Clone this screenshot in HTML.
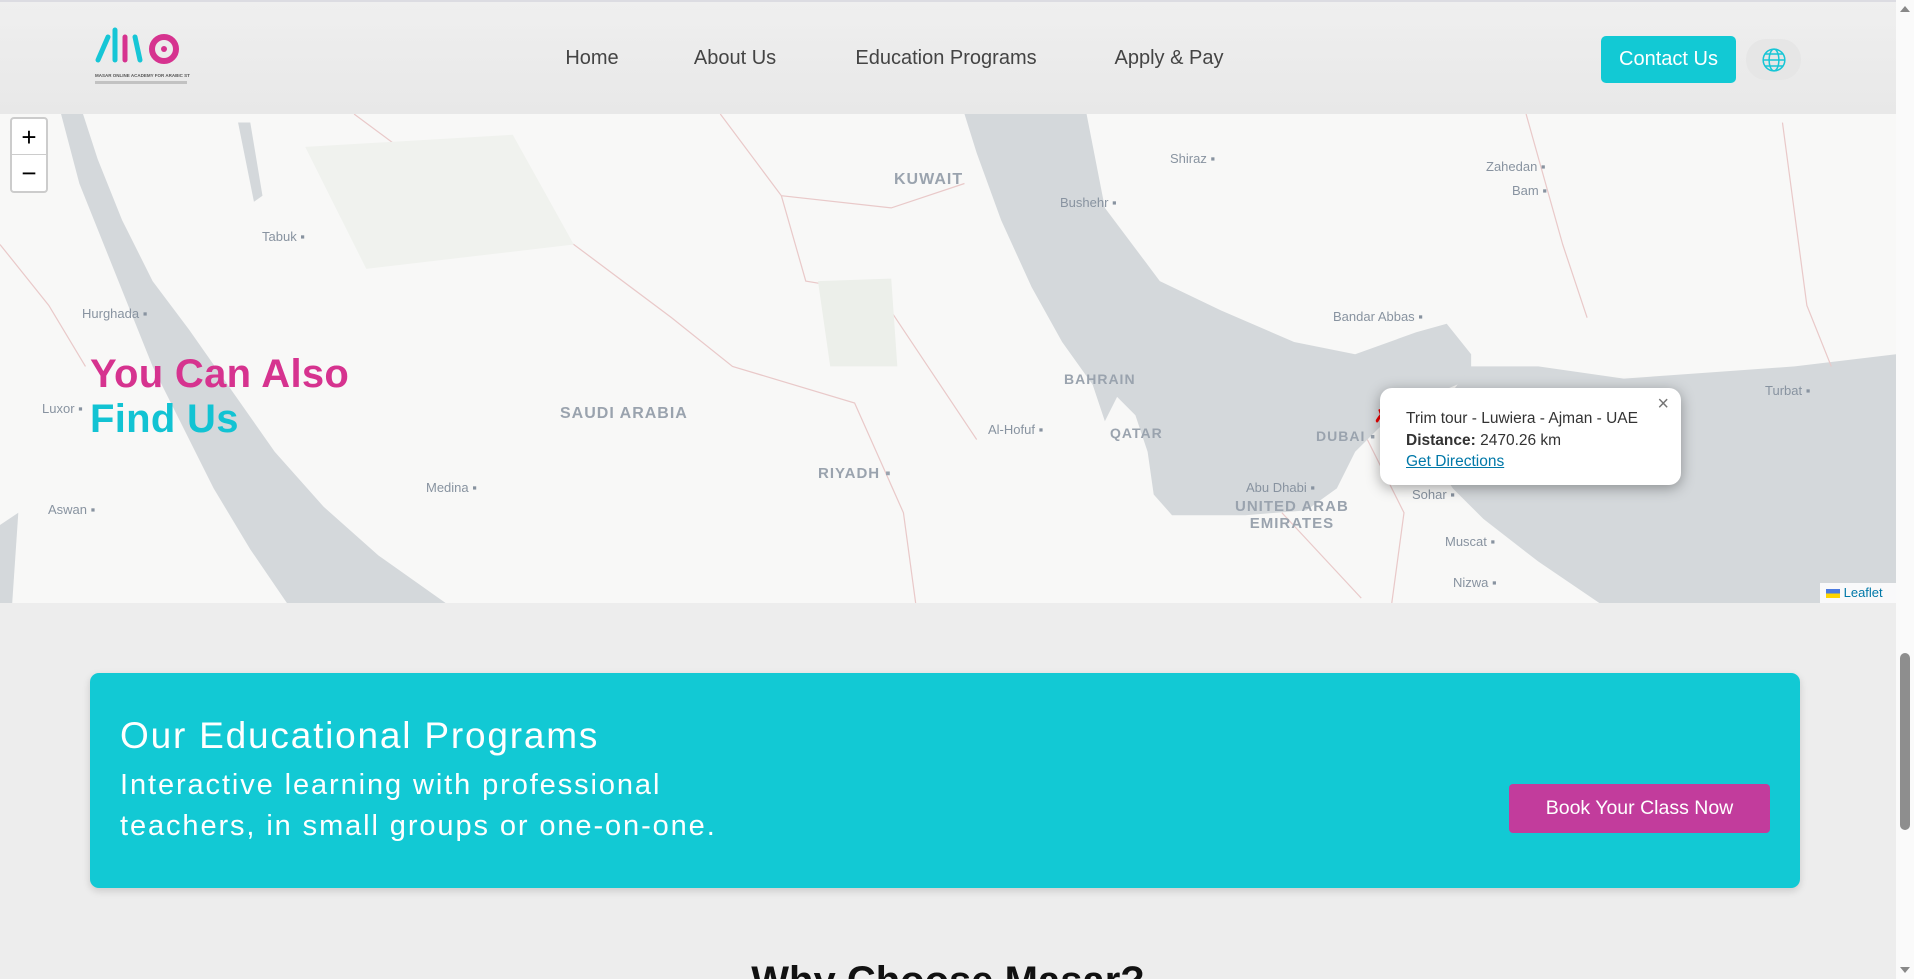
<!DOCTYPE html>
<html style="overflow:hidden;height:979px"><head><meta charset="utf-8"><style>
*{margin:0;padding:0;box-sizing:border-box}
body{width:1914px;height:979px;overflow:hidden;background:#ededed;font-family:"Liberation Sans",sans-serif;position:relative}
.hdr{position:absolute;left:0;top:0;width:1896px;height:114px;background:linear-gradient(#efefef,#e8e8e8);border-top:2px solid #dcdce2;z-index:5}
.nav a{position:absolute;top:45px;font-size:20px;color:#444;text-decoration:none;transform:translateX(-50%);white-space:nowrap}
.map{position:absolute;left:0;top:114px;width:1896px;height:489px;background:#f8f8f7;overflow:hidden}
.lbl{position:absolute;font-size:13px;color:#8893a0;white-space:nowrap}
.cap{position:absolute;font-size:16px;color:#9aa3ae;letter-spacing:1px;font-weight:bold;white-space:nowrap}
.sb{position:absolute;left:1896px;top:0;width:18px;height:979px;background:#fafafa}
</style></head><body>
<div class="hdr">
 <svg style="position:absolute;left:94px;top:25px" width="96" height="62" viewBox="0 0 96 62">
  <line x1="4" y1="33" x2="14" y2="10" stroke="#16c6d6" stroke-width="5" stroke-linecap="round"/>
  <line x1="21" y1="3" x2="21" y2="33" stroke="#16c6d6" stroke-width="5" stroke-linecap="round"/>
  <line x1="31" y1="10" x2="31" y2="33" stroke="#d6338f" stroke-width="5" stroke-linecap="round"/>
  <line x1="41" y1="10" x2="46" y2="33" stroke="#16c6d6" stroke-width="5" stroke-linecap="round"/>
  <circle cx="70" cy="22" r="12" fill="none" stroke="#d6338f" stroke-width="6"/>
  <circle cx="70" cy="22" r="3" fill="#d6338f"/>
  <text x="1" y="50" font-size="4.5" font-family="Liberation Sans" font-weight="bold" fill="#555">MASAR ONLINE ACADEMY FOR ARABIC STUDIES</text>
  <rect x="1" y="54" width="92" height="3" fill="#999" opacity=".5"/>
 </svg>
 <div class="nav"><a style="left:592px">Home</a><a style="left:735px">About Us</a><a style="left:946px">Education Programs</a><a style="left:1169px">Apply &amp; Pay</a></div>
 <div style="position:absolute;left:1601px;top:34px;width:135px;height:47px;background:#12c9d4;border-radius:5px;color:#fff;font-size:20px;line-height:47px;text-align:center">Contact Us</div>
 <div style="position:absolute;left:1746px;top:37px;width:55px;height:41px;background:#e6e6e6;border-radius:20px"></div>
 <svg style="position:absolute;left:1761px;top:45px" width="26" height="26" viewBox="0 0 24 24" fill="none" stroke="#16c6d6" stroke-width="1.4"><circle cx="12" cy="12" r="10"/><ellipse cx="12" cy="12" rx="4.5" ry="10"/><line x1="2" y1="12" x2="22" y2="12"/><path d="M4 6.5h16M4 17.5h16"/></svg>
</div>
<div class="map">
 <svg style="position:absolute;left:0;top:0" width="1896" height="489" viewBox="0 93 1553 401" preserveAspectRatio="none">
  <path d="M50 93 L68 93 L80 130 L100 180 L125 230 L155 270 L190 320 L225 370 L265 415 L310 455 L365 494 L235 494 L205 450 L175 400 L150 350 L125 300 L105 250 L85 200 L65 150 Z" fill="#d4d8db"/>
  <path d="M195 100 L205 100 L215 160 L208 165 Z" fill="#d4d8db"/>
  <path d="M0 430 L15 420 L10 494 L0 494 Z" fill="#d4d8db"/>
  <path d="M790 93 L890 93 L905 170 L950 230 L1000 254 L1060 280 L1110 290 L1160 272 L1185 265 L1205 290 L1205 310 L1170 325 L1135 345 L1110 370 L1095 400 L1070 418 L1020 422 L960 422 L945 405 L940 370 L930 340 L915 325 L905 345 L895 315 L870 280 L845 235 L820 180 L800 125 Z" fill="#d4d8db"/>
  <path d="M1205 300 L1260 300 L1330 310 L1400 305 L1470 300 L1553 290 L1553 494 L1310 494 L1260 460 L1215 425 L1190 400 L1170 370 L1170 340 L1190 320 Z" fill="#d4d8db"/>
  <g fill="none" stroke="#e9c9c9" stroke-width="1">
   <path d="M590 93 L640 160 L730 170 L790 150"/><path d="M640 160 L660 230 L720 240 L760 300 L800 360"/>
   <path d="M1050 420 L1115 490"/><path d="M1120 360 L1150 420 L1140 494"/>
   <path d="M1250 93 L1280 200 L1300 260"/><path d="M1460 100 L1480 250 L1500 300"/>
   <path d="M290 93 L380 160 L470 200 L550 260 L600 300 L700 330 L740 420 L750 494"/>
   <path d="M0 200 L40 250 L70 300"/>
  </g>
  <path d="M670 230 L730 228 L735 300 L680 300 Z" fill="#ecefea"/>
  <path d="M250 120 L420 110 L470 200 L300 220 Z" fill="#f0f2ee"/>
 </svg>
 <div class="lbl" style="left:262px;top:115px">Tabuk ▪</div>
 <div class="lbl" style="left:82px;top:192px">Hurghada ▪</div>
 <div class="lbl" style="left:42px;top:287px">Luxor ▪</div>
 <div class="lbl" style="left:48px;top:388px">Aswan ▪</div>
 <div class="lbl" style="left:426px;top:366px">Medina ▪</div>
 <div class="lbl" style="left:1060px;top:81px">Bushehr ▪</div>
 <div class="lbl" style="left:1170px;top:37px">Shiraz ▪</div>
 <div class="lbl" style="left:1486px;top:45px">Zahedan ▪</div>
 <div class="lbl" style="left:1512px;top:69px">Bam ▪</div>
 <div class="lbl" style="left:1333px;top:195px">Bandar Abbas ▪</div>
 <div class="lbl" style="left:988px;top:308px">Al-Hofuf ▪</div>
 <div class="lbl" style="left:1246px;top:366px">Abu Dhabi ▪</div>
 <div class="lbl" style="left:1412px;top:373px">Sohar ▪</div>
 <div class="lbl" style="left:1445px;top:420px">Muscat ▪</div>
 <div class="lbl" style="left:1453px;top:461px">Nizwa ▪</div>
 <div class="lbl" style="left:1765px;top:269px">Turbat ▪</div>
 <div class="cap" style="left:894px;top:57px">KUWAIT</div>
 <div class="cap" style="left:560px;top:291px">SAUDI ARABIA</div>
 <div class="cap" style="left:818px;top:351px;font-size:15px">RIYADH ▪</div>
 <div class="cap" style="left:1064px;top:257px;font-size:14px">BAHRAIN</div>
 <div class="cap" style="left:1110px;top:311px;font-size:14px">QATAR</div>
 <div class="cap" style="left:1316px;top:314px;font-size:14px">DUBAI ▪</div>
 <div class="cap" style="left:1235px;top:384px;font-size:15px;text-align:center">UNITED ARAB<br>EMIRATES</div>
 <div style="position:absolute;left:10px;top:3px;width:38px;height:76px;background:#fff;border:2px solid #ccc;border-radius:4px">
  <div style="height:36px;border-bottom:1px solid #ccc;font-size:26px;text-align:center;line-height:36px">+</div>
  <div style="font-size:26px;text-align:center;line-height:36px">−</div>
 </div>
 <div style="position:absolute;left:90px;top:238px;font-size:40px;font-weight:bold;line-height:45px;letter-spacing:0.3px"><span style="color:#d6338f">You Can Also</span><br><span style="color:#12c3d3">Find Us</span></div>
 <div style="position:absolute;left:1374px;top:292px;color:#e00;font-weight:bold;font-size:18px">✗</div>
 <div style="position:absolute;left:1380px;top:274px;width:301px;height:97px;background:#fff;border-radius:12px;box-shadow:0 3px 14px rgba(0,0,0,.35);font-size:15.5px;color:#333;padding:20px 0 0 26px;line-height:21.5px">
  <div style="position:absolute;right:12px;top:6px;font-size:20px;color:#757575">×</div>
  Trim tour - Luwiera - Ajman - UAE<br><b>Distance:</b> 2470.26 km<br><span style="color:#0078a8;text-decoration:underline">Get Directions</span>
 </div>
 <div style="position:absolute;left:1820px;top:469px;width:76px;height:20px;background:rgba(255,255,255,.85);font-size:13px;color:#0078a8;padding:2px 0 0 6px"><span style="display:inline-block;width:14px;height:9px;background:linear-gradient(#4c7be0 50%,#ffd500 50%);vertical-align:-1px"></span> Leaflet</div>
</div>
<div style="position:absolute;left:90px;top:673px;width:1710px;height:215px;background:#12c9d4;border-radius:9px;box-shadow:0 3px 8px rgba(0,0,0,.15);color:#fff">
 <div style="position:absolute;left:30px;top:42px;font-size:37px;letter-spacing:1.8px">Our Educational Programs</div>
 <div style="position:absolute;left:30px;top:92px;font-size:29px;line-height:41px;letter-spacing:1.9px">Interactive learning with professional<br>teachers, in small groups or one-on-one.</div>
 <div style="position:absolute;left:1419px;top:111px;width:261px;height:49px;background:#c23c9c;border-radius:4px;font-size:19.5px;line-height:49px;text-align:center">Book Your Class Now</div>
</div>
<div style="position:absolute;left:0;top:950px;width:1896px;height:29px;overflow:hidden">
 <div style="position:absolute;left:0;width:1896px;top:8px;text-align:center;font-size:40px;font-weight:bold;color:#111;line-height:46px">Why Choose Masar?</div>
</div>
<div class="sb">
 <div style="position:absolute;left:4px;top:6px;border:5px solid transparent;border-bottom:6px solid #888;border-top:0"></div>
 <div style="position:absolute;left:4px;top:653px;width:10px;height:177px;background:#8e8e8e;border-radius:5px"></div>
 <div style="position:absolute;left:4px;bottom:6px;border:5px solid transparent;border-top:6px solid #888;border-bottom:0"></div>
</div>
</body></html>
